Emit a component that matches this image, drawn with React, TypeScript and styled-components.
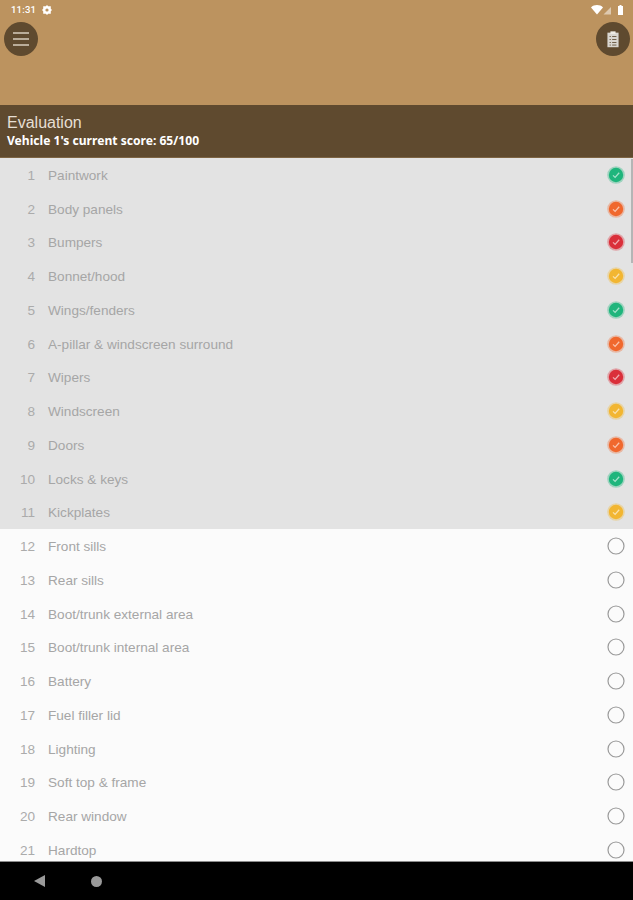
import styled, { createGlobalStyle } from 'styled-components';

const GlobalStyle = createGlobalStyle`
  html, body {
    margin: 0;
    padding: 0;
    background: #000;
  }
`;

const Page = styled.div`
  width: 633px;
  height: 900px;
  display: flex;
  flex-direction: column;
  overflow: hidden;
  font-family: 'Liberation Sans', Arial, sans-serif;
  background: #fafafa;
`;

const Hero = styled.header`
  height: 105px;
  flex: none;
  background: #bc935f;
  box-sizing: border-box;
`;

const StatusBar = styled.div`
  height: 19px;
  display: flex;
  align-items: center;
  justify-content: space-between;
  padding: 0 10px 1px 11px;
  color: #fff;
`;

const StatusGroup = styled.div`
  display: flex;
  align-items: center;
  gap: 6px;
`;

const Clock = styled.span`
  font-family: Roboto, sans-serif;
  font-size: 9.5px;
  font-weight: 500;
  letter-spacing: 0.2px;
`;

const Toolbar = styled.div`
  display: flex;
  justify-content: space-between;
  padding: 2px 3px 0 4px;
`;

const RoundButton = styled.button`
  width: 34px;
  height: 34px;
  padding: 0;
  border: 0;
  border-radius: 50%;
  background: #5f4a2f;
  display: flex;
  align-items: center;
  justify-content: center;
`;

const TitleBar = styled.div`
  height: 53px;
  flex: none;
  box-sizing: border-box;
  padding: 8px 7px 0;
  background: #5f4a2f;
  border-bottom: 1px solid #7d6443;
  color: #fff;
`;

const Title = styled.div`
  font-size: 16px;
  line-height: 19px;
  color: #e6dfd4;
`;

const Score = styled.div`
  font-family: 'Noto Sans', sans-serif;
  font-size: 12.1px;
  line-height: 17px;
  font-weight: 700;
  white-space: nowrap;
`;

const ListArea = styled.div`
  flex: 1;
  min-height: 0;
  position: relative;
  overflow: hidden;
`;

const Row = styled.div<{ $done: boolean }>`
  height: 33.75px;
  display: flex;
  align-items: center;
  padding: 0 8px 0 0;
  background: ${({ $done }) => ($done ? '#e3e3e3' : '#fbfbfb')};
  font-size: 13.6px;
`;

const RowNumber = styled.span`
  width: 35px;
  flex: none;
  padding-top: 1px;
  text-align: right;
  font-family: 'Liberation Sans', sans-serif;
  color: #ababab;
`;

const RowLabel = styled.span`
  flex: 1;
  margin-left: 13px;
  padding-top: 1px;
  font-family: 'Liberation Sans', sans-serif;
  color: #a6a6a6;
  white-space: nowrap;
`;

const Scrollbar = styled.div`
  position: absolute;
  top: 1px;
  right: 0;
  width: 2px;
  height: 104px;
  background: #b5b5b5;
`;

const NavBar = styled.nav`
  height: 39px;
  flex: none;
  box-sizing: border-box;
  border-top: 1px solid #8c8c8c;
  background: #000;
  display: flex;
  align-items: center;
  gap: 45px;
  padding: 0 0 0 34px;
`;

type Status = 'green' | 'orange' | 'red' | 'yellow' | 'none';

const statusColors: Record<Exclude<Status, 'none'>, string> = {
  green: '#1fb57c',
  orange: '#f0682e',
  red: '#da2f3a',
  yellow: '#f2b632',
};

const items: { label: string; status: Status }[] = [
  { label: 'Paintwork', status: 'green' },
  { label: 'Body panels', status: 'orange' },
  { label: 'Bumpers', status: 'red' },
  { label: 'Bonnet/hood', status: 'yellow' },
  { label: 'Wings/fenders', status: 'green' },
  { label: 'A-pillar & windscreen surround', status: 'orange' },
  { label: 'Wipers', status: 'red' },
  { label: 'Windscreen', status: 'yellow' },
  { label: 'Doors', status: 'orange' },
  { label: 'Locks & keys', status: 'green' },
  { label: 'Kickplates', status: 'yellow' },
  { label: 'Front sills', status: 'none' },
  { label: 'Rear sills', status: 'none' },
  { label: 'Boot/trunk external area', status: 'none' },
  { label: 'Boot/trunk internal area', status: 'none' },
  { label: 'Battery', status: 'none' },
  { label: 'Fuel filler lid', status: 'none' },
  { label: 'Lighting', status: 'none' },
  { label: 'Soft top & frame', status: 'none' },
  { label: 'Rear window', status: 'none' },
  { label: 'Hardtop', status: 'none' },
];

function StatusIcon({ status }: { status: Status }) {
  if (status === 'none') {
    return (
      <svg width="18" height="18" viewBox="0 0 18 18">
        <circle cx="9" cy="9" r="8" fill="none" stroke="#9a9a9a" strokeWidth="1.2" />
      </svg>
    );
  }
  const color = statusColors[status];
  return (
    <svg width="18" height="18" viewBox="0 0 18 18">
      <circle cx="9" cy="9" r="8.8" fill={color} opacity="0.35" />
      <circle cx="9" cy="9" r="7.2" fill={color} />
      <path d="M6 9.4l2.1 2L12.2 6.8" fill="none" stroke="#fff" strokeOpacity="0.6" strokeWidth="1.3" />
    </svg>
  );
}

export default function App() {
  return (
    <Page>
      <GlobalStyle />
      <Hero>
        <StatusBar>
          <StatusGroup>
            <Clock>11:31</Clock>
            <svg width="10" height="10" viewBox="0 0 10 10">
              <path d="M5 0l1.2 1.2h2.6v2.6L10 5 8.8 6.2v2.6H6.2L5 10 3.8 8.8H1.2V6.2L0 5l1.2-1.2V1.2h2.6z" fill="#fff" />
              <circle cx="5" cy="5" r="1.6" fill="#bc935f" />
            </svg>
          </StatusGroup>
          <StatusGroup>
            <svg width="21" height="10" viewBox="0 0 21 10">
              <path d="M0 2.4C3-.7 9-.7 12 2.4L6 9.5z" fill="#fff" />
              <path d="M20 2v7.5h-7.5z" fill="#fff" opacity="0.5" />
            </svg>
            <svg width="5" height="10" viewBox="0 0 5 10">
              <path d="M1.5 0h2v1H5v9H0V1h1.5z" fill="#fff" />
            </svg>
          </StatusGroup>
        </StatusBar>
        <Toolbar>
          <RoundButton aria-label="Menu">
            <svg width="18" height="14" viewBox="0 0 18 14">
              <path d="M1 1h16M1 7h16M1 13h16" stroke="#d8cdbd" strokeWidth="1.3" />
            </svg>
          </RoundButton>
          <RoundButton aria-label="Report">
            <svg width="12" height="17" viewBox="0 0 14 19">
              <rect x="0.5" y="1.5" width="13" height="17" fill="#d9d6d0" />
              <rect x="4" y="0" width="6" height="3" fill="#efece6" />
              <path d="M3 6h1.5M6 6h5M3 9.5h1.5M6 9.5h5M3 13h1.5M6 13h5M3 16h1.5M6 16h5" stroke="#6b5a44" strokeWidth="1.1" />
            </svg>
          </RoundButton>
        </Toolbar>
      </Hero>
      <TitleBar>
        <Title>Evaluation</Title>
        <Score>Vehicle 1's current score: 65/100</Score>
      </TitleBar>
      <ListArea>
        {items.map((item, index) => (
          <Row key={item.label} $done={item.status !== 'none'}>
            <RowNumber>{index + 1}</RowNumber>
            <RowLabel>{item.label}</RowLabel>
            <StatusIcon status={item.status} />
          </Row>
        ))}
        <Scrollbar />
      </ListArea>
      <NavBar>
        <svg width="12" height="12" viewBox="0 0 12 12">
          <path d="M11 0v12L0 6z" fill="#9a9a9a" />
        </svg>
        <svg width="11" height="11" viewBox="0 0 11 11">
          <circle cx="5.5" cy="5.5" r="5.5" fill="#9a9a9a" />
        </svg>
      </NavBar>
    </Page>
  );
}
